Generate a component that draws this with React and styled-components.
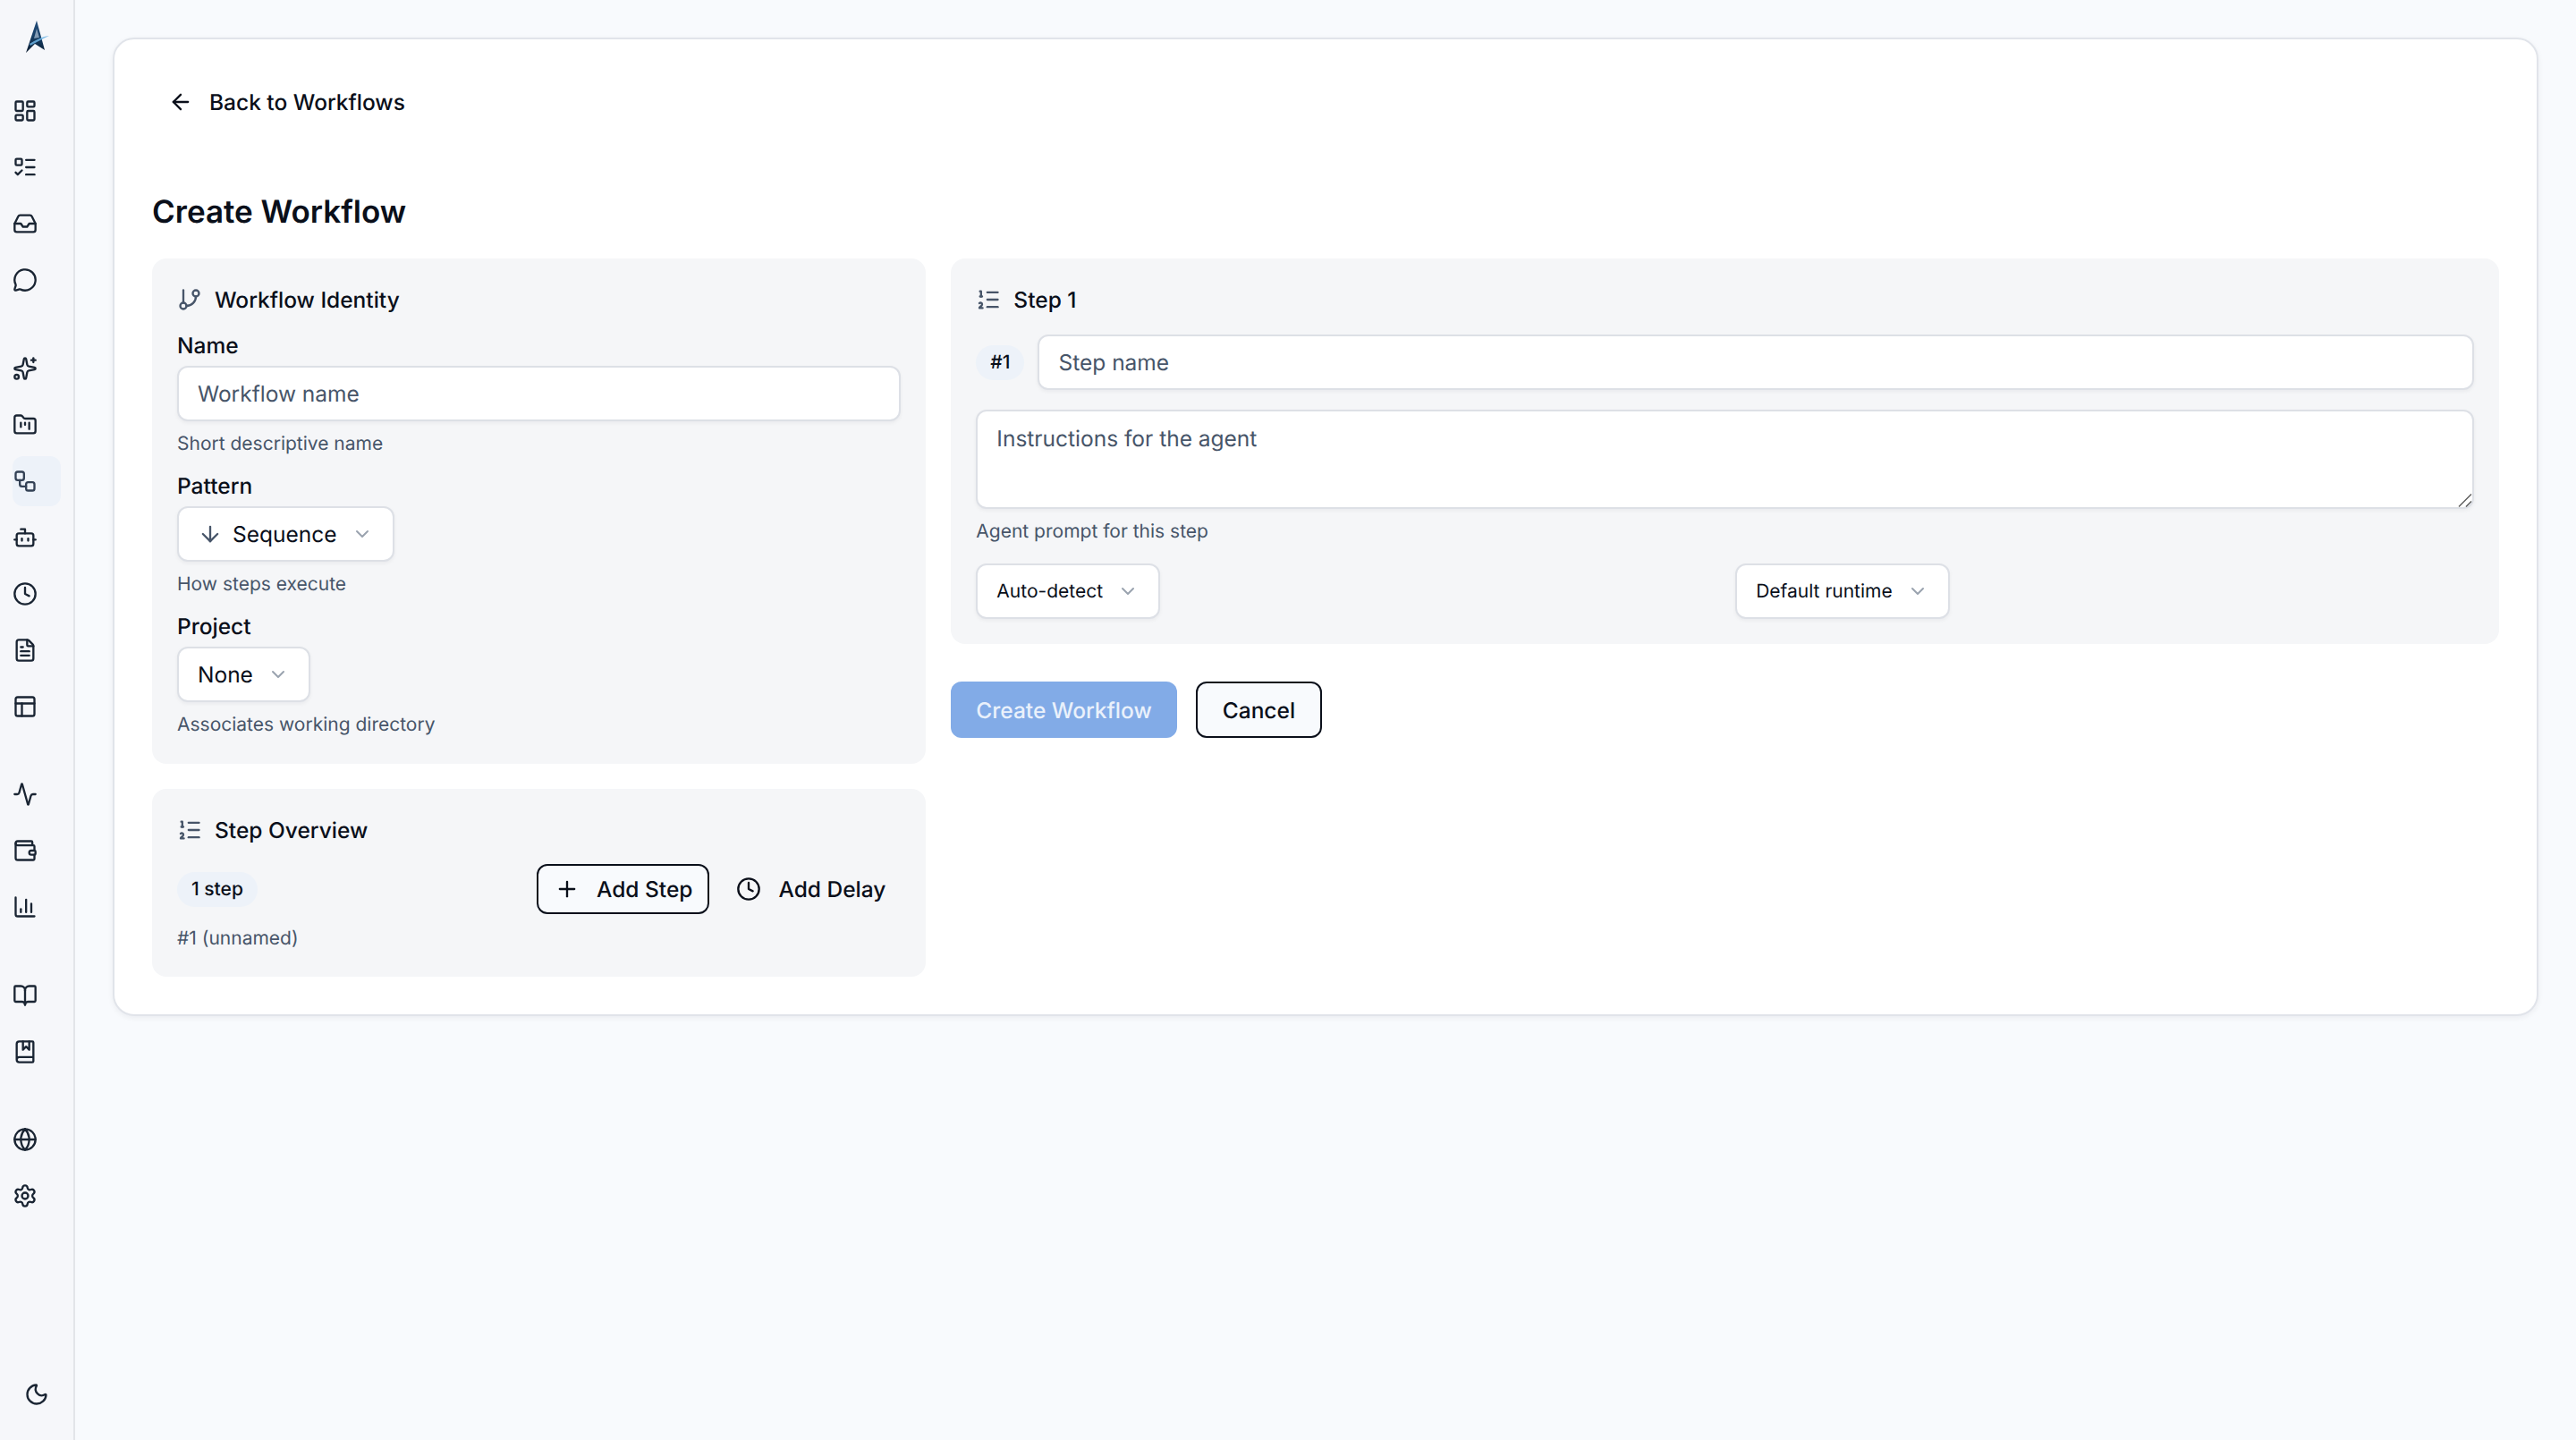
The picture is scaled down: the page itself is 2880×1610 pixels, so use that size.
import styled, { createGlobalStyle } from 'styled-components';
import {
	Activity,
	ArrowDown,
	ArrowLeft,
	BookMarked,
	BookOpen,
	Bot,
	ChartColumn,
	ChevronDown,
	Clock,
	FileText,
	FolderKanban,
	GitBranch,
	Globe,
	Inbox,
	LayoutDashboard,
	ListOrdered,
	ListTodo,
	MessageCircle,
	Moon,
	PanelsTopLeft,
	Plus,
	Settings,
	Sparkles,
	Wallet,
	Workflow,
} from 'lucide-react';

const navGroups = [
	[LayoutDashboard, ListTodo, Inbox, MessageCircle],
	[Sparkles, FolderKanban, Workflow, Bot, Clock, FileText, PanelsTopLeft],
	[Activity, Wallet, ChartColumn],
	[BookOpen, BookMarked],
	[Globe, Settings],
];

function Logo() {
	return (
		<svg width='28' height='38' viewBox='0 0 28 38'>
			<defs>
				<linearGradient id='logoFill' x1='0.5' y1='0' x2='0.4' y2='1'>
					<stop offset='0' stopColor='#264f7c' />
					<stop offset='0.5' stopColor='#153d64' />
					<stop offset='1' stopColor='#0c1d30' />
				</linearGradient>
			</defs>
			<path d='M13 1 L22 34 L11 27 L1 37 Z' fill='url(#logoFill)' />
			<path d='M13 10 L16 20 L10 21 Z' fill='#c9d8e8' opacity='0.6' />
			<path d='M5 27 C12 23 18 19 27 18 C20 21 13 25 6 29 Z' fill='#6db4e4' opacity='0.85' />
		</svg>
	);
}

function App() {
	return (
		<>
			<GlobalStyle />
			<Shell>
				<Sidebar>
					<LogoWrap>
						<Logo />
					</LogoWrap>
					{navGroups.map((group, i) => (
						<NavGroup key={i}>
							{group.map((Icon, j) => (
								<NavItem key={j} $active={Icon === Workflow}>
									<Icon size={28} strokeWidth={2} />
								</NavItem>
							))}
						</NavGroup>
					))}
					<ThemeToggle>
						<Moon size={28} strokeWidth={2} />
					</ThemeToggle>
				</Sidebar>

				<Main>
					<Card>
						<BackLink>
							<ArrowLeft size={28} strokeWidth={2} />
							Back to Workflows
						</BackLink>
						<PageTitle>Create Workflow</PageTitle>

						<Columns>
							<Column>
								<Panel>
									<PanelTitle>
										<GitBranch size={28} strokeWidth={2} />
										Workflow Identity
									</PanelTitle>
									<FieldStack>
										<Field>
											<Label>Name</Label>
											<TextInput placeholder='Workflow name' />
											<Hint>Short descriptive name</Hint>
										</Field>
										<Field>
											<Label>Pattern</Label>
											<Select>
												<ArrowDown size={28} strokeWidth={2} color='#475569' />
												<span>Sequence</span>
												<Chevron size={24} strokeWidth={2} />
											</Select>
											<Hint>How steps execute</Hint>
										</Field>
										<Field>
											<Label>Project</Label>
											<Select>
												<span>None</span>
												<Chevron size={24} strokeWidth={2} />
											</Select>
											<Hint>Associates working directory</Hint>
										</Field>
									</FieldStack>
								</Panel>

								<Panel>
									<PanelTitle>
										<ListOrdered size={28} strokeWidth={2} />
										Step Overview
									</PanelTitle>
									<OverviewRow>
										<Chip>1 step</Chip>
										<Actions>
											<OutlineButton>
												<Plus size={28} strokeWidth={2} />
												Add Step
											</OutlineButton>
											<GhostButton>
												<Clock size={28} strokeWidth={2} />
												Add Delay
											</GhostButton>
										</Actions>
									</OverviewRow>
									<OverviewHint>#1 (unnamed)</OverviewHint>
								</Panel>
							</Column>

							<Column>
								<Panel>
									<PanelTitle>
										<ListOrdered size={28} strokeWidth={2} />
										Step 1
									</PanelTitle>
									<StepNameRow>
										<Chip>#1</Chip>
										<TextInput placeholder='Step name' />
									</StepNameRow>
									<PromptWrap>
										<PromptArea placeholder='Instructions for the agent' />
										<ResizeGrip width='16' height='16' viewBox='0 0 16 16'>
											<path d='M1 15.5 L15 1.5 M9 15.5 L15 9.5' stroke='#5a5a5a' strokeWidth='1.4' fill='none' />
										</ResizeGrip>
									</PromptWrap>
									<Hint>Agent prompt for this step</Hint>
									<SelectGrid>
										<div>
											<SmallSelect>
												<span>Auto-detect</span>
												<Chevron size={24} strokeWidth={2} />
											</SmallSelect>
										</div>
										<div>
											<SmallSelect>
												<span>Default runtime</span>
												<Chevron size={24} strokeWidth={2} />
											</SmallSelect>
										</div>
									</SelectGrid>
								</Panel>

								<FormActions>
									<PrimaryButton disabled>Create Workflow</PrimaryButton>
									<CancelButton>Cancel</CancelButton>
								</FormActions>
							</Column>
						</Columns>
					</Card>
				</Main>
			</Shell>
		</>
	);
}

const GlobalStyle = createGlobalStyle`
	* {
		box-sizing: border-box;
	}

	html,
	body {
		margin: 0;
		padding: 0;
	}

	body {
		background: #f8fafd;
		color: #0a0f1a;
		font-family: 'Inter', 'Liberation Sans', sans-serif;
		text-rendering: geometricPrecision;
		-webkit-font-smoothing: antialiased;
	}

	button,
	input,
	textarea {
		font-family: inherit;
		text-rendering: inherit;
	}
`;

const Shell = styled.div`
	display: flex;
	min-height: 1610px;
`;

const Sidebar = styled.aside`
	width: 84px;
	flex-shrink: 0;
	display: flex;
	flex-direction: column;
	gap: 42.5px;
	padding: 0 14px 37px;
	background: #f6f7fa;
	border-right: 2px solid #e3e5e9;
`;

const LogoWrap = styled.div`
	display: flex;
	height: 96px;
	margin-bottom: -42.5px;
	padding: 22px 0 0 14px;
`;

const NavGroup = styled.nav`
	display: flex;
	flex-direction: column;
	gap: 7px;
`;

const NavItem = styled.div`
	width: 54px;
	height: 56px;
	display: flex;
	align-items: center;
	border-radius: 12px;
	color: ${(p) => (p.$active ? '#334155' : '#1a2533')};
	background: ${(p) => (p.$active ? '#edf2f9' : 'transparent')};
`;

const ThemeToggle = styled.div`
	margin: auto 0 0 13px;
	height: 28px;
	color: #1a2533;
`;

const Main = styled.main`
	flex: 1;
	min-width: 0;
	padding: 42px;
`;

const Card = styled.section`
	background: #fff;
	border: 2px solid #e1e4ea;
	border-radius: 24px;
	padding: 42px;
	box-shadow: 0 2px 6px rgba(15, 23, 42, 0.06);
`;

const BackLink = styled.div`
	height: 56px;
	padding: 0 18px;
	display: inline-flex;
	align-items: center;
	gap: 18px;
	font-size: 24.5px;
	font-weight: 500;
	color: #0a0f1a;
	vertical-align: top;
`;

const PageTitle = styled.h1`
	margin: 67px 0 24px;
	font-size: 35px;
	line-height: 56px;
	font-weight: 600;
	color: #0a0f1a;
`;

const Columns = styled.div`
	display: grid;
	grid-template-columns: 1fr 2fr;
	gap: 28px;
	align-items: start;
`;

const Column = styled.div`
	display: flex;
	flex-direction: column;
	gap: 28px;
	min-width: 0;
`;

const Panel = styled.div`
	background: #f5f6f8;
	border-radius: 16px;
	padding: 28px;
`;

const PanelTitle = styled.div`
	height: 34px;
	padding-top: 1px;
	display: flex;
	align-items: center;
	gap: 14px;
	font-size: 24.5px;
	font-weight: 500;
	color: #0a0f1a;

	svg {
		color: #475569;
	}
`;

const FieldStack = styled.div`
	display: flex;
	flex-direction: column;
	gap: 11px;
	margin: 16px 0 -1px;
`;

const Field = styled.div`
	display: flex;
	flex-direction: column;
	align-items: flex-start;
`;

const Label = styled.label`
	height: 36px;
	line-height: 36px;
	margin: 1px 0 5px;
	font-size: 24.5px;
	font-weight: 500;
	color: #0a0f1a;
`;

const TextInput = styled.input`
	width: 100%;
	height: 62px;
	padding: 0 21px;
	font-size: 24.5px;
	color: #0a0f1a;
	background: #fff;
	border: 2px solid #dde0e6;
	border-radius: 12px;
	outline: none;
	box-shadow: 0 2px 4px rgba(15, 23, 42, 0.05);

	&::placeholder {
		color: #475569;
		opacity: 1;
	}
`;

const Hint = styled.div`
	margin-top: 10px;
	height: 32px;
	line-height: 32px;
	font-size: 21px;
	color: #475569;
`;

const Select = styled.div`
	height: 62px;
	display: inline-flex;
	align-items: center;
	gap: 11px;
	padding: 0 22px 0 21px;
	font-size: 24.5px;
	color: #0a0f1a;
	background: #fff;
	border: 2px solid #dde0e6;
	border-radius: 12px;
	box-shadow: 0 2px 4px rgba(15, 23, 42, 0.05);
`;

const Chevron = styled(ChevronDown)`
	margin-left: 5px;
	color: #9aa3af;
`;

const SmallSelect = styled(Select)`
	font-size: 21px;
`;

const OverviewRow = styled.div`
	display: flex;
	align-items: center;
	justify-content: space-between;
	margin-top: 22px;
`;

const Chip = styled.span`
	height: 39px;
	padding: 0 16px;
	flex-shrink: 0;
	display: inline-flex;
	align-items: center;
	border-radius: 20px;
	background: #edf2f9;
	font-size: 21px;
	font-weight: 500;
	color: #0a0f1a;
`;

const Actions = styled.div`
	display: flex;
	gap: 10px;
`;

const OutlineButton = styled.button`
	height: 56px;
	padding: 0 17px 0 18px;
	display: inline-flex;
	align-items: center;
	gap: 19px;
	font-size: 24.5px;
	font-weight: 500;
	color: #0a0f1a;
	background: #f8fafd;
	border: 2px solid #0a0f1a;
	border-radius: 12px;
`;

const GhostButton = styled(OutlineButton)`
	padding-right: 15px;
	background: transparent;
	border-color: transparent;
`;

const OverviewHint = styled(Hint)`
	margin-top: 12px;
	height: 30px;
`;

const StepNameRow = styled.div`
	display: flex;
	align-items: center;
	gap: 15px;
	margin-top: 23px;
`;

const PromptWrap = styled.div`
	position: relative;
	margin-top: 22px;
`;

const PromptArea = styled.textarea`
	display: block;
	width: 100%;
	height: 111px;
	padding: 10px 21px;
	font-size: 24.5px;
	line-height: 40px;
	color: #0a0f1a;
	background: #fff;
	border: 2px solid #dde0e6;
	border-radius: 12px;
	outline: none;
	resize: none;
	box-shadow: 0 2px 4px rgba(15, 23, 42, 0.05);

	&::placeholder {
		color: #475569;
		opacity: 1;
	}
`;

const ResizeGrip = styled.svg`
	position: absolute;
	right: 2px;
	bottom: 2px;
`;

const SelectGrid = styled.div`
	display: grid;
	grid-template-columns: 1fr 1fr;
	gap: 23px;
	margin-top: 19px;
`;

const FormActions = styled.div`
	display: flex;
	gap: 21px;
	margin-top: 14px;
`;

const PrimaryButton = styled.button`
	height: 63px;
	padding: 0 28px;
	font-size: 24.5px;
	font-weight: 500;
	color: #eaf1fb;
	background: #82abe7;
	border: none;
	border-radius: 12px;
`;

const CancelButton = styled.button`
	height: 63px;
	padding: 0 28px;
	font-size: 24.5px;
	font-weight: 500;
	color: #0a0f1a;
	background: #f8fafd;
	border: 2px solid #0a0f1a;
	border-radius: 12px;
`;

export default App;
